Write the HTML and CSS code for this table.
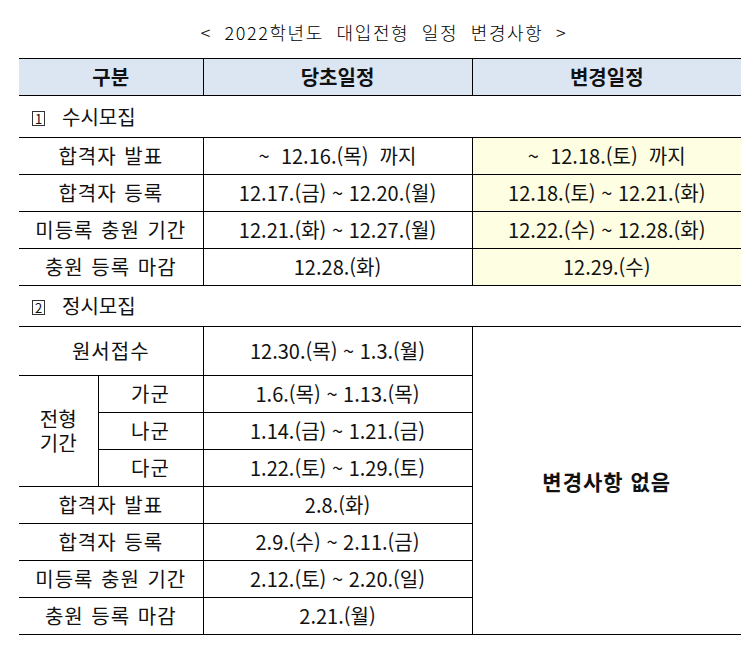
FILE: index.html
```html
<!DOCTYPE html>
<html lang="ko">
<head>
<meta charset="utf-8">
<title>2022학년도 대입전형 일정 변경사항</title>
<link rel="stylesheet" href="styles.css">
</head>
<body>
<div class="page">
  <h1 class="title">&lt; 2022학년도 대입전형 일정 변경사항 &gt;</h1>
  <table class="sched">
    <colgroup>
      <col class="c1"><col class="c2"><col class="c3"><col class="c4">
    </colgroup>
    <thead>
      <tr class="head">
        <th colspan="2">구분</th>
        <th>당초일정</th>
        <th>변경일정</th>
      </tr>
    </thead>
    <tbody>
      <tr class="section s1">
        <td colspan="4"><span class="num">1</span>수시모집</td>
      </tr>
      <tr class="row">
        <td colspan="2" class="label">합격자 발표</td>
        <td>~&nbsp; 12.16.(목)&nbsp; 까지</td>
        <td class="changed">~&nbsp; 12.18.(토)&nbsp; 까지</td>
      </tr>
      <tr class="row">
        <td colspan="2" class="label">합격자 등록</td>
        <td>12.17.(금) ~ 12.20.(월)</td>
        <td class="changed">12.18.(토) ~ 12.21.(화)</td>
      </tr>
      <tr class="row">
        <td colspan="2" class="label">미등록 충원 기간</td>
        <td>12.21.(화) ~ 12.27.(월)</td>
        <td class="changed">12.22.(수) ~ 12.28.(화)</td>
      </tr>
      <tr class="row">
        <td colspan="2" class="label">충원 등록 마감</td>
        <td>12.28.(화)</td>
        <td class="changed">12.29.(수)</td>
      </tr>
      <tr class="section s2">
        <td colspan="4"><span class="num">2</span>정시모집</td>
      </tr>
      <tr class="row tall">
        <td colspan="2" class="label">원서접수</td>
        <td>12.30.(목) ~ 1.3.(월)</td>
        <td rowspan="8" class="none">변경사항 없음</td>
      </tr>
      <tr class="row">
        <td rowspan="3" class="group">전형<br>기간</td>
        <td class="sub">가군</td>
        <td>1.6.(목) ~ 1.13.(목)</td>
      </tr>
      <tr class="row">
        <td class="sub">나군</td>
        <td>1.14.(금) ~ 1.21.(금)</td>
      </tr>
      <tr class="row">
        <td class="sub">다군</td>
        <td>1.22.(토) ~ 1.29.(토)</td>
      </tr>
      <tr class="row">
        <td colspan="2" class="label">합격자 발표</td>
        <td>2.8.(화)</td>
      </tr>
      <tr class="row">
        <td colspan="2" class="label">합격자 등록</td>
        <td>2.9.(수) ~ 2.11.(금)</td>
      </tr>
      <tr class="row">
        <td colspan="2" class="label">미등록 충원 기간</td>
        <td>2.12.(토) ~ 2.20.(일)</td>
      </tr>
      <tr class="row">
        <td colspan="2" class="label">충원 등록 마감</td>
        <td>2.21.(월)</td>
      </tr>
    </tbody>
  </table>
</div>
</body>
</html>
```

FILE: styles.css
```css
html, body {
  margin: 0;
  padding: 0;
  background: #ffffff;
}

.page {
  padding: 22px 0 0 19px;
  width: 722px;
  font-family: "Noto Sans CJK KR", "Noto Sans", sans-serif;
  color: #111;
}

.title {
  margin: 0 0 15px 0;
  height: 21px;
  font-family: "Noto Sans CJK KR", sans-serif;
  font-weight: 300;
  font-size: 18px;
  line-height: 21px;
  text-align: center;
  letter-spacing: 1.6px;
  word-spacing: 6px;
  padding-left: 8px;
  color: #000;
}

.sched {
  width: 722px;
  border-collapse: collapse;
  table-layout: fixed;
  font-size: 20px;
}

.c1 { width: 79px; }
.c2 { width: 105px; }
.c3 { width: 269px; }
.c4 { width: 269px; }

.sched th,
.sched td {
  padding: 0;
  text-align: center;
  vertical-align: middle;
  border: 1px solid #000;
  line-height: 24px;
  white-space: nowrap;
}

.head th {
  height: 36px;
  background: #dce6f2;
  font-weight: 700;
  font-size: 20px;
  border-top: 1px solid #000;
}

.sched tr > :first-child { border-left: none; }
.sched tr > :last-child { border-right: none; }
.sched td.none { border-right: none; }

.section td {
  text-align: left;
  padding-left: 13px;
  border-left: none;
  border-right: none;
}

.s1 td { height: 41px; }
.s2 td { height: 40px; }

.num {
  display: inline-block;
  width: 11px;
  height: 13px;
  border: 1px solid #333;
  font-size: 13px;
  line-height: 13px;
  text-align: center;
  margin-right: 17px;
  vertical-align: 1px;
}

.row td { height: 36px; }
.row.tall td { height: 48px; }

.label {
  letter-spacing: 1px;
  word-spacing: 1px;
}

.sub {
  letter-spacing: 1px;
}

.group {
  line-height: 24px;
  padding-bottom: 4px;
}

.changed {
  background: #fefee2;
}

.none {
  font-weight: 700;
  font-size: 21px;
  letter-spacing: 1px;
  padding-bottom: 2px;
}
```
